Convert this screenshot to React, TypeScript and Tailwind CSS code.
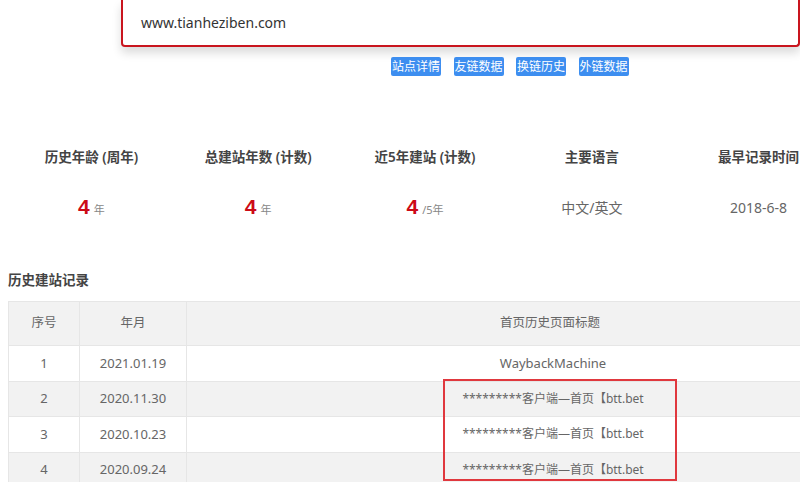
import React from "react";

const stats = [
  { label: "历史年龄 (周年)", value: "4", unit: "年" },
  { label: "总建站年数 (计数)", value: "4", unit: "年" },
  { label: "近5年建站 (计数)", value: "4", unit: "/5年" },
  { label: "主要语言", text: "中文/英文" },
  { label: "最早记录时间", text: "2018-6-8" },
];

const rows = [
  { n: "1", d: "2021.01.19", t: "WaybackMachine", small: false },
  { n: "2", d: "2020.11.30", t: "*********客户端—首页【btt.bet", small: true },
  { n: "3", d: "2020.10.23", t: "*********客户端—首页【btt.bet", small: true },
  { n: "4", d: "2020.09.24", t: "*********客户端—首页【btt.bet", small: true },
];

export default function App() {
  return (
    <div
      className="relative w-[800px] h-[482px] overflow-hidden bg-white text-[#333]"
      style={{ fontFamily: '"Noto Sans", "Noto Sans CJK SC", sans-serif' }}
    >
      {/* search box */}
      <div className="ml-[121px] w-[679px] h-[47px] border-2 border-t-0 border-[#c9151e] rounded-b-[4px] bg-white shadow-[0_6px_10px_rgba(0,0,0,0.14)] flex items-center pl-[18px] text-[14px] text-[#333]">
        www.tianheziben.com
      </div>

      {/* buttons */}
      <div className="mt-[10px] ml-[391px] flex gap-[12.5px]">
        {["站点详情", "友链数据", "换链历史", "外链数据"].map((b) => (
          <div
            key={b}
            className="w-[50px] h-[19px] rounded-[2px] bg-[#3d8ef0] text-white text-[12px] leading-[19px] text-center"
          >
            {b}
          </div>
        ))}
      </div>

      {/* stats */}
      <div className="mt-[70px] ml-[8px] w-[834px] grid grid-cols-5">
        {stats.map((s) => (
          <div key={s.label} className="flex flex-col items-center">
            <div className="h-[22px] leading-[22px] text-[13.5px] font-semibold text-[#444] whitespace-nowrap">
              {s.label}
            </div>
            <div className="mt-[24px] h-[30px] flex items-center justify-center">
              {s.value ? (
                <span className="flex items-baseline">
                  <span
                    className="text-[21px] font-bold text-[#cc0a16]"
                    style={{ fontFamily: '"Liberation Sans", sans-serif' }}
                  >
                    {s.value}
                  </span>
                  <span className="ml-[4px] text-[11px] text-[#888]">{s.unit}</span>
                </span>
              ) : (
                <span className="text-[14px] text-[#666]">{s.text}</span>
              )}
            </div>
          </div>
        ))}
      </div>

      {/* title */}
      <div className="mt-[48px] ml-[8px] h-[20px] leading-[20px] text-[13.5px] font-semibold text-[#444]">
        历史建站记录
      </div>

      {/* table */}
      <div className="mt-[11px] ml-[8px] w-[904px] border-t border-l border-[#e6e6e6] text-[13px] text-[#666]">
        <div className="grid grid-cols-[71px_107px_726px] h-[44px] bg-[#f2f2f2] border-b border-[#e6e6e6] text-[12.5px] text-[#666]">
          <div className="flex items-center justify-center border-r border-[#e6e6e6]">序号</div>
          <div className="flex items-center justify-center border-r border-[#e6e6e6]">年月</div>
          <div className="flex items-center justify-center">首页历史页面标题</div>
        </div>
        {rows.map((r, i) => (
          <div
            key={r.n}
            className={`grid grid-cols-[71px_107px_726px] h-[35.5px] border-b border-[#e6e6e6] ${
              i % 2 === 1 ? "bg-[#f2f2f2]" : "bg-white"
            }`}
          >
            <div className="flex items-center justify-center border-r border-[#e6e6e6]">{r.n}</div>
            <div className="flex items-center justify-center border-r border-[#e6e6e6]">{r.d}</div>
            <div
              className={`flex items-center justify-center pl-[6px] ${
                r.small ? "text-[12px]" : "text-[13px]"
              }`}
            >
              {r.t}
            </div>
          </div>
        ))}
      </div>

      {/* annotation box */}
      <div className="absolute left-[443px] top-[379px] w-[234px] h-[102px] border-2 border-[#e0383e]" />
    </div>
  );
}
